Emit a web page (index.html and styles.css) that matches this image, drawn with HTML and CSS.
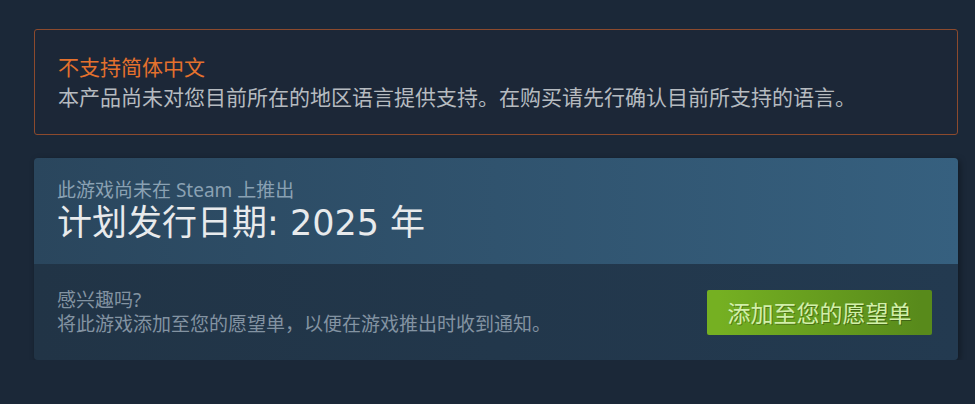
FILE: index.html
```html
<!DOCTYPE html>
<html lang="zh-CN">
<head>
  <meta charset="UTF-8" />
  <meta name="viewport" content="width=device-width, initial-scale=1.0"/>
  <title>计划发行日期</title>

  <link rel="stylesheet" href="styles.css">
</head>
<body>
  <main class="page">
    <section class="lang-warning">
      <h3>不支持简体中文</h3>
      <p>本产品尚未对您目前所在的地区语言提供支持。在购买请先行确认目前所支持的语言。</p>
    </section>

    <section class="coming-soon">
      <div class="release">
        <p class="release-note">此游戏尚未在 Steam 上推出</p>
        <h2>计划发行日期: 2025 年</h2>
      </div>
      <div class="wishlist">
        <div class="wishlist-text">
          <p>感兴趣吗?</p>
          <p>将此游戏添加至您的愿望单，以便在游戏推出时收到通知。</p>
        </div>
        <button class="btn-green">添加至您的愿望单</button>
      </div>
    </section>
  </main>
</body>
</html>
```

FILE: styles.css
```css
body {
  font-family: "Noto Sans", "Noto Sans CJK SC", sans-serif;
  margin: 0;
  background: #1b2838;
  color: #acb2b8;
}

.page {
  padding: 29px 17px 0 34px;
}

.lang-warning {
  border: 1px solid #8c4a2d;
  border-radius: 3px;
  padding: 22px 23px;
  background: #1c2737;
}

.lang-warning h3 {
  margin: 0;
  font-size: 21px;
  font-weight: normal;
  line-height: 30px;
  color: #e4712d;
}

.lang-warning p {
  margin: 0;
  font-size: 21px;
  line-height: 30px;
  color: #b6bbc0;
}

.coming-soon {
  margin-top: 23px;
  border-radius: 4px;
  overflow: hidden;
  box-shadow: 2px 2px 6px rgba(0, 0, 0, 0.35);
}

.release {
  height: 106px;
  box-sizing: border-box;
  padding: 20px 23px 0;
  background: linear-gradient(to right, #2a465d, #36607f);
}

.release-note {
  margin: 0;
  font-size: 19px;
  line-height: 25px;
  color: #8aa1b3;
}

.release h2 {
  margin: 0;
  font-family: "DejaVu Sans", "Noto Sans CJK SC", sans-serif;
  font-size: 35px;
  font-weight: normal;
  line-height: 41px;
  color: #e8eaec;
}

.wishlist {
  height: 96px;
  box-sizing: border-box;
  padding: 0 26px 0 23px;
  display: flex;
  justify-content: space-between;
  align-items: center;
  background: linear-gradient(to right, #213446, #233a50);
}

.wishlist-text p {
  margin: 0;
  font-size: 19px;
  line-height: 24px;
  color: #8393a2;
}

.btn-green {
  width: 225px;
  height: 45px;
  border: none;
  border-radius: 2px;
  padding: 0;
  font-family: inherit;
  font-size: 23px;
  color: #d2efa9;
  background: linear-gradient(to right, #75b022 5%, #588a1b 95%);
  text-shadow: 1px 1px 0 rgba(0, 0, 0, 0.3);
}
```
